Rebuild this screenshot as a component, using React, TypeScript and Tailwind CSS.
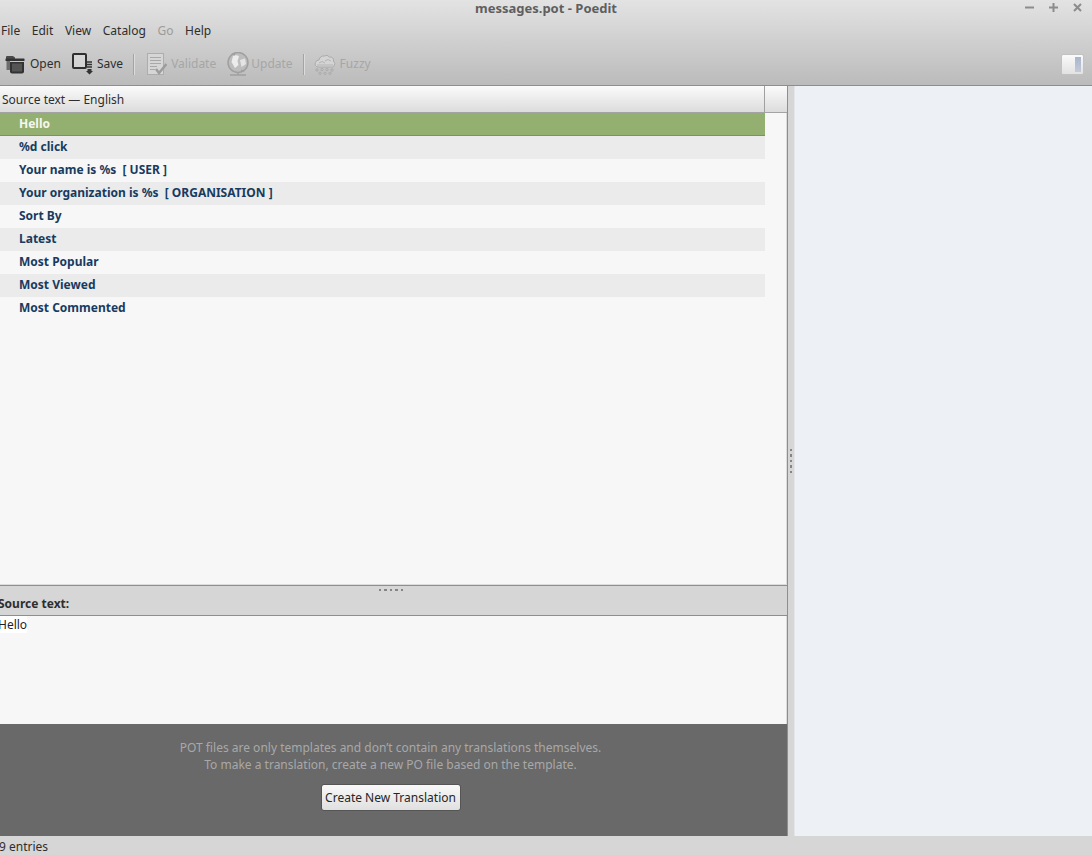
const rows = [
  { t: "Hello", sel: true },
  { t: "%d click", alt: true },
  { t: "Your name is %s  [ USER ]" },
  { t: "Your organization is %s  [ ORGANISATION ]", alt: true },
  { t: "Sort By" },
  { t: "Latest", alt: true },
  { t: "Most Popular" },
  { t: "Most Viewed", alt: true },
  { t: "Most Commented" },
];

const OpenIcon = () => (
  <svg width="20" height="20" viewBox="0 0 20 20" className="shrink-0">
    <path d="M1 3 Q1 2 2 2 H8 L10 3.500 H10 V5 H1 Z" fill="#4a4a4a" />
    <rect x="0.500" y="4.500" width="19" height="2.500" rx="0.500" fill="#333" />
    <rect x="1.500" y="7" width="3.500" height="9" fill="#6d6d6d" />
    <path d="M5 8 H19 V17.500 Q19 19.500 17 19.500 H7 Q5 19.500 5 17.500 Z" fill="#333" />
    <rect x="7" y="9.500" width="10" height="8" fill="#555" />
  </svg>
);

const SaveIcon = () => (
  <svg width="22" height="22" viewBox="0 0 22 22" className="shrink-0">
    <rect x="1" y="1" width="13" height="14" rx="1" fill="#ffffff" fillOpacity="0.25" stroke="#2f2f2f" strokeWidth="2" />
    <path d="M15 9 H20 M15 11.500 H20 M15 14 H20" stroke="#333" strokeWidth="1.500" />
    <path d="M15.500 16 H19.500 V18 H21 L17.500 21.500 L14 18 H15.500 Z" fill="#333" />
  </svg>
);

const ValidateIcon = () => (
  <svg width="20" height="22" viewBox="0 0 20 22" className="shrink-0">
    <rect x="0.500" y="0.500" width="16" height="21" fill="#d6d6d6" stroke="#adadad" />
    <path d="M3 4.500 H14 M3 7.500 H14 M3 10.500 H14 M3 13.500 H10 M3 16.500 H8" stroke="#a8a8a8" />
    <path d="M9 16 L12 20 L19.500 11" fill="none" stroke="#9c9c9c" strokeWidth="2.500" />
  </svg>
);

const UpdateIcon = () => (
  <svg width="22" height="24" viewBox="0 0 22 24" className="shrink-0">
    <circle cx="11" cy="10.500" r="10" fill="#bdbdbd" stroke="#a0a0a0" strokeWidth="1.500" />
    <path d="M6 4 Q10 2.500 12 4.500 L10.500 9 L11.500 13 L8 16 L4.500 10 Z" fill="#ececec" />
    <path d="M13 8 L18 6.500 L19 12 L14.500 15 Z" fill="#e4e4e4" />
    <path d="M4 2 L8 0.500 L8 3.500 Z M18 19 L14 20.500 L14 17.500 Z" fill="#a0a0a0" />
    <path d="M11 20.500 V22.500 M3 23 H19" stroke="#a0a0a0" strokeWidth="1.500" />
  </svg>
);

const FuzzyIcon = () => (
  <svg width="22" height="22" viewBox="0 0 22 22" className="shrink-0">
    <path d="M4 14 Q0 13 1.500 9.500 Q2 7 5 7 Q6 2.500 10.500 3 Q13 1 15.500 4 Q20 4 19.500 8 Q22 10.500 20 13 Q19 14.500 17 14 Z" fill="#d4d4d4" stroke="#ababab" />
    <path d="M5 10 Q8 7 11 10 M11 8 Q14 5 17 8 M3 12 H19" fill="none" stroke="#b4b4b4" />
    <g fill="none" stroke="#ababab">
      <circle cx="3" cy="17" r="1.200" /><circle cx="8" cy="16.500" r="1.200" /><circle cx="13" cy="16.500" r="1.200" /><circle cx="18" cy="17" r="1.200" />
      <circle cx="6" cy="20.300" r="1.200" /><circle cx="11" cy="20.300" r="1.200" /><circle cx="16" cy="20.300" r="1.200" />
    </g>
  </svg>
);

const Sep = () => <div className="w-px h-[21px] bg-[#a4a4a4] border-r border-[#dcdcdc] box-content" />;

const Dot = ({ big }: { big?: boolean }) => (
  <div className={`bg-[#858585] ${big ? "w-[3px] h-[2px]" : "w-[2px] h-[2px]"}`} />
);
const DotV = ({ big }: { big?: boolean }) => (
  <div className={`bg-[#858585] w-[2px] ${big ? "h-[3px]" : "h-[2px]"}`} />
);

export default function App() {
  return (
    <div
      className="w-[1092px] h-[855px] overflow-hidden flex flex-col bg-[#d6d6d6] text-[12px] text-[#2e2e2e]"
      style={{ fontFamily: '"Noto Sans", sans-serif' }}
    >
      <header className="h-[86px] shrink-0 flex flex-col bg-gradient-to-b from-[#e3e3e3] to-[#bbbbbb] border-b border-[#8e8e8e]">
        <div className="h-[16px] flex items-center relative">
          <div className="w-full text-center font-bold text-[#5f5f5f] text-[13px] leading-[16px]">messages.pot - Poedit</div>
          <div className="absolute right-[10px] top-[3px] flex items-center gap-[15px] text-[#8c8c8c]">
            <svg width="9" height="9" viewBox="0 0 9 9"><rect y="3.500" width="9" height="2" fill="currentColor" /></svg>
            <svg width="9" height="9" viewBox="0 0 9 9"><path d="M3.500 0h2v3.500H9v2H5.500V9h-2V5.500H0v-2h3.500z" fill="currentColor" /></svg>
            <svg width="9" height="9" viewBox="0 0 9 9"><path d="M1 1 L8 8 M8 1 L1 8" stroke="currentColor" strokeWidth="2" /></svg>
          </div>
        </div>
        <nav className="h-[29px] flex items-center gap-[11.6px] leading-none pt-[1px]">
          <span className="ml-[1px]">File</span>
          <span>Edit</span>
          <span>View</span>
          <span>Catalog</span>
          <span className="text-[#9b9b9b]">Go</span>
          <span>Help</span>
        </nav>
        <div className="flex-1 flex items-center pb-[2px] pl-[5px] pr-[8px]">
          <OpenIcon />
          <span className="ml-[5px]">Open</span>
          <div className="ml-[11px]"><SaveIcon /></div>
          <span className="ml-[3px]">Save</span>
          <div className="ml-[10px]"><Sep /></div>
          <div className="ml-[12px]"><ValidateIcon /></div>
          <span className="ml-[4px] text-[#a6a6a6]">Validate</span>
          <div className="ml-[11px]"><UpdateIcon /></div>
          <span className="ml-[2px] text-[#a6a6a6]">Update</span>
          <div className="ml-[10px]"><Sep /></div>
          <div className="ml-[9px]"><FuzzyIcon /></div>
          <span className="ml-[4px] text-[#a6a6a6]">Fuzzy</span>
          <div className="ml-auto w-[23px] h-[21px] rounded-[2px] border border-[#c2c2c2] bg-gradient-to-b from-[#fafafa] to-[#e2e2e2] flex justify-end items-center pr-[2px]">
            <div className="w-[6px] h-[15px] bg-gradient-to-b from-[#a9b5cc] to-[#c4cbd8]" />
          </div>
        </div>
      </header>

      <div className="flex-1 flex min-h-0">
        <div className="w-[788px] shrink-0 flex flex-col border-r border-[#8e8e8e]">
          <div className="h-[500px] shrink-0 flex flex-col bg-[#f7f7f7] border-b border-[#8e8e8e] shadow-[inset_-1px_-1px_0_#dcdcdc]">
            <div className="h-[27px] shrink-0 flex bg-gradient-to-b from-[#fbfbfb] to-[#dcdcdc] border-b border-[#a3a3a3]">
              <div className="w-[765px] border-r border-[#a0a0a0] pl-[2px] leading-[28px]">Source text — English</div>
            </div>
            <div className="w-[765px] font-bold text-[#173b60]">
              {rows.map((r) => (
                <div
                  key={r.t}
                  className={`h-[23px] pl-[19px] whitespace-pre ${
                    r.sel
                      ? "bg-[#94b070] text-[#f5f7ef] border-b border-[#7d8f6b] leading-[21px]"
                      : r.alt
                      ? "bg-[#ebebeb] leading-[21px]"
                      : "leading-[21px]"
                  }`}
                >
                  {r.t}
                </div>
              ))}
            </div>
          </div>
          <div className="h-[30px] shrink-0 border-b border-[#8e8e8e] flex flex-col">
            <div className="h-[6px] flex items-center justify-center gap-[3px] pt-[1px] pr-[6px]">
              <Dot /><Dot big /><Dot /><Dot big /><Dot />
            </div>
            <div className="font-bold -ml-[2px] leading-[17px] mt-[3px] text-[#2e2e2e]">Source text:</div>
          </div>
          <div className="h-[108px] shrink-0 bg-[#f7f7f7] shadow-[inset_-1px_0_0_#dcdcdc]">
            <span className="bg-white -ml-[2px] inline-block leading-[17px] text-[#1f1f1f]">Hello</span>
          </div>
          <div className="h-[112px] shrink-0 bg-[#696969] flex flex-col items-center pt-[15px] pr-[6px]">
            <div className="text-center leading-[17px] text-[#a8a8a8]">
              POT files are only templates and don’t contain any translations themselves.
              <br />
              To make a translation, create a new PO file based on the template.
            </div>
            <button className="mt-[11px] h-[27px] w-[140px] rounded-[3px] border border-[#555] bg-gradient-to-b from-[#f8f8f8] to-[#e0e0e0] text-[#262626] text-[12px] leading-none">
              Create New Translation
            </button>
          </div>
          <div className="flex-1 -mr-[1px] bg-[#d6d6d6] -ml-[1px] leading-[22px] text-[#2e2e2e]">9 entries</div>
        </div>

        <div className="w-[6px] shrink-0 flex flex-col items-center justify-center gap-[3px] mb-[19px] pr-[1px]">
          <DotV /><DotV big /><DotV /><DotV big /><DotV />
        </div>

        <div className="flex-1 flex flex-col">
          <div className="h-[750px] bg-[#edf0f5] border-l border-[#e3e5e8]" />
        </div>
      </div>
    </div>
  );
}
